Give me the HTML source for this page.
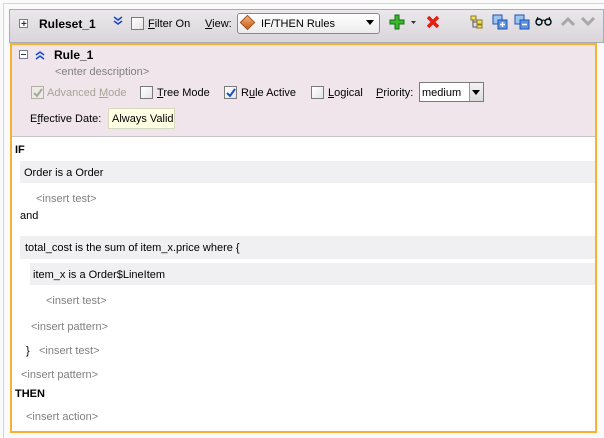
<!DOCTYPE html>
<html><head><meta charset="utf-8"><style>
*{margin:0;padding:0;box-sizing:border-box}
body{width:604px;height:438px;background:#fafafa;font-family:"Liberation Sans",sans-serif;font-size:11px;color:#000;position:relative;overflow:hidden}
.a{position:absolute;white-space:nowrap;line-height:13px;margin-top:1px}
.g{color:#808080}
.b{font-weight:bold}
.cb{position:absolute;width:13px;height:13px;border:1px solid #7a7a7a;background:linear-gradient(135deg,#fff,#e4e4e4)}
.band{position:absolute;background:#f0f0f2}
u{text-decoration:underline}
</style></head><body>
<div style="position:absolute;left:3px;top:3px;width:601px;height:1px;background:#d6d6d6"></div>
<div style="position:absolute;left:3px;top:3px;width:1px;height:435px;background:#d6d6d6"></div>
<!-- toolbar -->
<div style="position:absolute;left:9px;top:9px;width:595px;height:34px;border:1px solid #a8acb8;background:linear-gradient(#ebe8ec,#d9d5da)"></div>
<div style="position:absolute;left:19px;top:19px;width:9px;height:9px;border:1px solid #6f7f96;background:#fff"></div>
<div class="a" style="left:21px;top:17px;font-size:10px;font-weight:bold;color:#333">+</div>
<div class="a b" style="left:39px;top:17px;font-size:12px">Ruleset_1</div>
<svg style="position:absolute;left:113px;top:16px" width="10" height="10"><path d="M1 1l4 3 4-3M1 5l4 3 4-3" stroke="#1846c8" stroke-width="1.5" fill="none"/></svg>
<div class="cb" style="left:131px;top:17px"></div>
<div class="a" style="left:148px;top:17px"><u>F</u>ilter On</div>
<div class="a" style="left:205px;top:17px"><u>V</u>iew:</div>
<div style="position:absolute;left:237px;top:13px;width:143px;height:21px;border:1px solid #8a8a8a;border-radius:3px;background:linear-gradient(#fff,#ebebeb)"></div>
<div style="position:absolute;left:242px;top:17px;width:11px;height:11px;background:linear-gradient(135deg,#f3b27a,#c85a18);transform:rotate(45deg);border:1px solid #9a4a15"></div>
<div class="a" style="left:261px;top:17px">IF/THEN Rules</div>
<svg style="position:absolute;left:366px;top:20px" width="8" height="5"><path d="M0 0h8L4 5z" fill="#000"/></svg>
<svg style="position:absolute;left:389px;top:14px" width="16" height="16"><path d="M6 1h4v5h5v4h-5v5H6v-5H1V6h5z" fill="#3db82c" stroke="#0d7010"/></svg>
<svg style="position:absolute;left:411px;top:21px" width="5" height="3"><path d="M0 0h5L2.5 3z" fill="#333"/></svg>
<svg style="position:absolute;left:426px;top:15px" width="14" height="14"><path d="M2 2l10 10M12 2L2 12" stroke="#e02010" stroke-width="3.5"/></svg>
<svg style="position:absolute;left:470px;top:15px" width="14" height="14"><rect x="1" y="1" width="5" height="4" fill="#f0e060" stroke="#8a7a20"/><rect x="7" y="5" width="5" height="4" fill="#f0e060" stroke="#8a7a20"/><rect x="7" y="10" width="5" height="3" fill="#f0e060" stroke="#8a7a20"/><path d="M3 5v7h4M3 7h4" stroke="#555" fill="none"/></svg>
<svg style="position:absolute;left:492px;top:14px" width="16" height="16"><rect x="1" y="1" width="9" height="9" fill="#9cc4f0" stroke="#2050b0"/><rect x="6" y="6" width="9" height="9" fill="#5a96e0" stroke="#2050b0"/><path d="M8 10.5h5M10.5 8v5" stroke="#fff" stroke-width="1.5"/></svg>
<svg style="position:absolute;left:514px;top:14px" width="16" height="16"><rect x="1" y="1" width="9" height="9" fill="#9cc4f0" stroke="#2050b0"/><rect x="6" y="6" width="9" height="9" fill="#5a96e0" stroke="#2050b0"/><path d="M8 10.5h5" stroke="#fff" stroke-width="1.5"/></svg>
<svg style="position:absolute;left:535px;top:16px" width="17" height="10"><circle cx="4" cy="6" r="3" fill="#d0e8f0" stroke="#000" stroke-width="1.4"/><circle cx="13" cy="6" r="3" fill="#d0e8f0" stroke="#000" stroke-width="1.4"/><path d="M7 5q1.5-2 3 0M1 5l2-4M16 5l-2-4" stroke="#000" fill="none"/></svg>
<svg style="position:absolute;left:561px;top:17px" width="14" height="9"><path d="M1 8l6-6 6 6" stroke="#a8a8a8" stroke-width="3" fill="none"/></svg>
<svg style="position:absolute;left:581px;top:17px" width="14" height="9"><path d="M1 1l6 6 6-6" stroke="#a8a8a8" stroke-width="3" fill="none"/></svg>
<!-- rule box -->
<div style="position:absolute;left:10px;top:43px;width:587px;height:390px;border:2px solid #f8b030;background:#fff"></div>
<div style="position:absolute;left:12px;top:45px;width:583px;height:92px;background:#efe5eb;border-bottom:1px solid #c8c4c8"></div>
<div style="position:absolute;left:19px;top:50px;width:9px;height:9px;border:1px solid #6f7f96;background:#fff"></div>
<div style="position:absolute;left:21px;top:54px;width:5px;height:1px;background:#333"></div>
<svg style="position:absolute;left:35px;top:50px" width="10" height="10"><path d="M1 5l4-3 4 3M1 9l4-3 4 3" stroke="#1846c8" stroke-width="1.5" fill="none"/></svg>
<div class="a b" style="left:54px;top:48px;font-size:12px">Rule_1</div>
<div class="a g" style="left:55px;top:65px">&lt;enter description&gt;</div>
<div class="cb" style="left:31px;top:86px;border-color:#b0b0a8;background:#ecebe4"></div>
<svg style="position:absolute;left:33px;top:88px" width="10" height="10"><path d="M1 5l3 3 5-7" stroke="#a8a8a0" stroke-width="2" fill="none"/></svg>
<div class="a" style="left:47px;top:86px;color:#a8a498">Advanced <u>M</u>ode</div>
<div class="cb" style="left:140px;top:86px"></div>
<div class="a" style="left:157px;top:86px"><u>T</u>ree Mode</div>
<div class="cb" style="left:224px;top:86px"></div>
<svg style="position:absolute;left:226px;top:88px" width="10" height="10"><path d="M1 5l3 3 5-7" stroke="#2050c0" stroke-width="2" fill="none"/></svg>
<div class="a" style="left:241px;top:86px">R<u>u</u>le Active</div>
<div class="cb" style="left:311px;top:86px"></div>
<div class="a" style="left:328px;top:86px"><u>L</u>ogical</div>
<div class="a" style="left:376px;top:86px"><u>P</u>riority:</div>
<div style="position:absolute;left:419px;top:82px;width:65px;height:20px;border:1px solid #7a7a7a;background:#fff"></div>
<div class="a" style="left:422px;top:86px">medium</div>
<div style="position:absolute;left:469px;top:83px;width:14px;height:18px;border-left:1px solid #999;background:linear-gradient(#f4f4f4,#dcdcdc)"></div>
<svg style="position:absolute;left:472px;top:90px" width="8" height="5"><path d="M0 0h8L4 5z" fill="#000"/></svg>
<div class="a" style="left:30px;top:112px">E<u>f</u>fective Date:</div>
<div style="position:absolute;left:108px;top:108px;width:67px;height:21px;border:1px solid #d8d8c0;background:#ffffe4"></div>
<div class="a" style="left:112px;top:112px">Always Valid</div>
<!-- content -->
<div class="a b" style="left:15px;top:143px">IF</div>
<div class="band" style="left:20px;top:161px;width:575px;height:22px"></div>
<div class="a" style="left:24px;top:166px">Order is a Order</div>
<div class="a g" style="left:36px;top:192px">&lt;insert test&gt;</div>
<div class="a" style="left:20px;top:209px">and</div>
<div class="band" style="left:20px;top:236px;width:575px;height:23px"></div>
<div class="a" style="left:25px;top:241px">total_cost is the sum of item_x.price where {</div>
<div class="band" style="left:30px;top:263px;width:565px;height:22px"></div>
<div class="a" style="left:33px;top:268px">item_x is a Order$LineItem</div>
<div class="a g" style="left:46px;top:294px">&lt;insert test&gt;</div>
<div class="a g" style="left:31px;top:320px">&lt;insert pattern&gt;</div>
<div class="a" style="left:26px;top:344px">}</div>
<div class="a g" style="left:39px;top:344px">&lt;insert test&gt;</div>
<div class="a g" style="left:21px;top:368px">&lt;insert pattern&gt;</div>
<div class="a b" style="left:15px;top:387px">THEN</div>
<div class="a g" style="left:26px;top:410px">&lt;insert action&gt;</div>
</body></html>
